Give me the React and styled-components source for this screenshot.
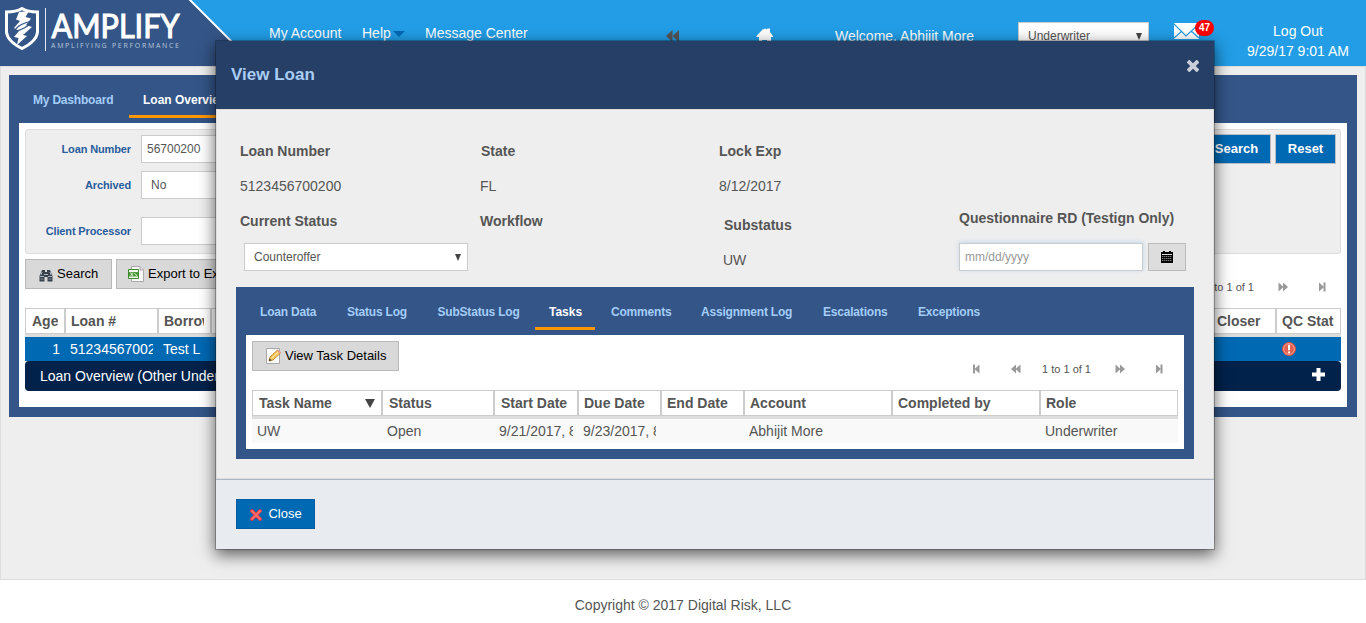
import React from "react";
import styled, { createGlobalStyle } from "styled-components";

const Global = createGlobalStyle`
  *, *::before, *::after { box-sizing: border-box; }
  html, body { margin: 0; padding: 0; height: 623px; overflow: hidden; background: #fff; }
  body { font-family: "Liberation Sans", Arial, sans-serif; font-size: 14px; line-height: 16px; color: #555; }
  svg { display: block; flex: none; }
`;

const Page = styled.div`
  position: relative;
  width: 1366px;
  height: 623px;
  overflow: hidden;
`;

/* ---------- top bar ---------- */
const TopBar = styled.header`
  display: flex;
  align-items: flex-start;
  height: 66px;
  background: #229de6;
  color: #fff;
`;
const TopLink = styled.a`
  display: flex;
  align-items: center;
  gap: 2px;
  white-space: nowrap;
  width: ${(p) => p.$w}px;
  margin-top: ${(p) => p.$top || 25}px;
`;
const IconSlot = styled.span`
  width: ${(p) => p.$w}px;
  margin-top: ${(p) => p.$top}px;
`;
const RoleSelect = styled.div`
  display: flex;
  justify-content: space-between;
  width: 131px;
  height: 28px;
  margin-top: 22px;
  padding: 6px 6px 0 9px;
  border: 1px solid #ccc;
  background: #fff;
  color: #555;
  font-size: 12px;
  line-height: 14px;
`;
const Mail = styled.div`
  position: relative;
  width: 60px;
  margin: 23px 0 0 25px;
`;
const MailBadge = styled.span`
  position: absolute;
  left: 21px;
  top: -3px;
  width: 19px;
  height: 16px;
  border-radius: 8px;
  background: #f00;
  font-size: 10px;
  font-weight: bold;
  line-height: 16px;
  text-align: center;
`;
const Session = styled.div`
  width: 110px;
  margin: 21px 0 0 9px;
  line-height: 20px;
  text-align: center;
`;

/* ---------- page panels ---------- */
const Main = styled.main`
  height: 514px;
  padding: 8px;
  border: 1px solid #ddd;
  background: #eee;
`;
const TabPanel = styled.section`
  width: ${(p) => p.$w}px;
  padding: 0 10px 10px;
  background: #345587;
`;
const Tabs = styled.nav`
  display: flex;
  height: 48px;
  padding-top: ${(p) => p.$top}px;
`;
const Tab = styled.a`
  width: ${(p) => p.$w}px;
  height: 25px;
  margin-right: ${(p) => p.$gap || 0}px;
  padding-left: 14px;
  border-bottom: 3px solid ${(p) => (p.$active ? "#ff9800" : "transparent")};
  color: ${(p) => (p.$active ? "#fff" : "#a3cdf8")};
  font-size: 12px;
  font-weight: bold;
  line-height: 14px;
  letter-spacing: ${(p) => (p.$active ? 0 : -0.2)}px;
  white-space: nowrap;
`;
const PanelBody = styled.div`
  height: ${(p) => p.$h}px;
  padding: 6px;
  background: #fff;
`;
const Filters = styled.div`
  display: flex;
  justify-content: space-between;
  height: 125px;
  padding: 4px;
  border: 1px solid #ddd;
  border-radius: 3px;
  background: #eee;
`;
const FilterList = styled.div`
  padding: 1px;
`;
const FilterRow = styled.label`
  display: flex;
  align-items: center;
  height: 28px;
  margin-bottom: ${(p) => p.$gap}px;
`;
const FilterName = styled.span`
  width: 101px;
  padding-right: 1px;
  color: #2a5d9c;
  font-size: 11px;
  font-weight: bold;
  letter-spacing: -0.13px;
  text-align: right;
  white-space: nowrap;
`;
const FilterBox = styled.span`
  width: 180px;
  height: 28px;
  margin-left: 9px;
  padding: 5px ${(p) => p.$pad || 5}px;
  border: 1px solid #ccc;
  background: #fff;
  font-size: 12px;
`;
const FilterActions = styled.div`
  display: flex;
  gap: 4px;
`;
const BlueButton = styled.button`
  display: flex;
  align-items: center;
  justify-content: center;
  gap: 5px;
  width: ${(p) => p.$w}px;
  height: 30px;
  padding: 0 0 2px;
  border: 1px solid ${(p) => p.$edge || "#b9bec4"};
  background: #0069b4;
  color: #fff;
  font: ${(p) => (p.$bold ? "bold" : "normal")} 13px "Liberation Sans", Arial, sans-serif;
`;
const GrayButton = styled.button`
  display: flex;
  align-items: center;
  gap: 4px;
  width: ${(p) => p.$w}px;
  height: 30px;
  padding: 0 0 0 ${(p) => p.$pad}px;
  border: 1px solid #b8b8b8;
  background: #d9d9d9;
  color: #000;
  font: 13px "Liberation Sans", Arial, sans-serif;
  white-space: nowrap;
  span { margin-top: -2px; }
`;
const ButtonRow = styled.div`
  display: flex;
  gap: 4px;
  margin-top: ${(p) => p.$top || 0}px;
`;
const Pager = styled.div`
  display: flex;
  align-items: center;
  justify-content: flex-end;
  height: 12px;
  margin-left: auto;
  margin-right: ${(p) => p.$right}px;
  margin-top: ${(p) => p.$top}px;
  color: #555;
  font-size: 11px;
  line-height: 12px;
  span { margin: 0 24px 0 21px; }
  svg + svg { margin-left: 31px; }
`;

/* ---------- data tables ---------- */
const Grid = styled.div`
  margin-top: ${(p) => p.$top}px;
`;
const GridHead = styled.div`
  display: flex;
  height: 29px;
  border-bottom: 3px solid #ddd;
`;
const HeadCell = styled.div`
  display: flex;
  justify-content: space-between;
  flex: none;
  width: ${(p) => p.$w}px;
  height: 26px;
  padding: 4px 0 0 ${(p) => p.$pad || 5}px;
  border: 1px solid #ccc;
  background: #fff;
  font-weight: bold;
  white-space: nowrap;
  span { overflow: hidden; margin-right: 6px; }
`;
const GridRow = styled.div`
  display: flex;
  height: 24px;
  background: ${(p) => (p.$selected ? "#0069b4" : "#f9f9f9")};
  color: ${(p) => (p.$selected ? "#fff" : "#555")};
`;
const Cell = styled.div`
  flex: none;
  width: ${(p) => p.$w}px;
  padding: 4px 5px 0;
  text-align: ${(p) => p.$align || "left"};
  span { display: block; overflow: hidden; white-space: nowrap; }
`;
const Accordion = styled.div`
  display: flex;
  justify-content: space-between;
  height: 30px;
  padding: 7px 16px 0 15px;
  border-radius: 4px;
  background: #00224b;
  color: #fff;
`;
const Footer = styled.footer`
  padding-top: 17px;
  text-align: center;
`;

/* ---------- dialog ---------- */
const Dialog = styled.div`
  position: absolute;
  left: 215px;
  top: 40px;
  width: 1000px;
  border: 1px solid rgba(0, 0, 0, 0.25);
  background: #eee;
  background-clip: padding-box;
  box-shadow: 0 5px 15px rgba(0, 0, 0, 0.6);
`;
const DialogHead = styled.div`
  display: flex;
  justify-content: space-between;
  height: 68px;
  padding: 18px 15px 0;
  background: #263f66;
  color: #a9cdf5;
  font-size: 17px;
  font-weight: bold;
  line-height: 32px;
`;
const DialogBody = styled.div`
  height: 370px;
  padding: 0 0 0 19px;
  border: 1px solid #ddd;
`;
const DialogFoot = styled.div`
  height: 70px;
  padding: 19px 20px;
  border-top: 1px solid #acb6c4;
  background: #e8ecf1;
`;
const Fields = styled.div`
  display: flex;
  height: 177px;
`;
const Field = styled.div`
  width: ${(p) => p.$w}px;
  padding-top: 33px;
  padding-left: 4px;
`;
const Name = styled.div`
  margin-top: ${(p) => p.$top || 0}px;
  margin-left: ${(p) => p.$dx || 0}px;
  font-weight: bold;
  white-space: nowrap;
`;
const Value = styled.div`
  margin-top: ${(p) => p.$top}px;
  margin-left: ${(p) => p.$dx || 0}px;
`;
const StatusSelect = styled.div`
  display: flex;
  justify-content: space-between;
  width: 224px;
  height: 28px;
  margin: 14px 0 0 4px;
  padding: 5px 6px 0 9px;
  border: 1px solid #ccc;
  background: #fff;
  font-size: 12px;
`;
const DateRow = styled.div`
  display: flex;
  gap: 5px;
  margin-top: 17px;
`;
const DateInput = styled.div`
  width: 184px;
  height: 28px;
  padding: 5px;
  border: 1px solid #ccc;
  background: #fff;
  box-shadow: 0 -1px 4px rgba(102, 175, 233, 0.35);
  color: #999;
  font-size: 12px;
`;
const CalendarButton = styled.button`
  display: flex;
  align-items: center;
  justify-content: center;
  width: 38px;
  height: 28px;
  padding: 0 0 1px;
  border: 1px solid #bbb;
  background: #ddd;
`;
const CloseIcon = styled.span`
  margin-top: 1px;
`;

/* ---------- drawings ---------- */
const Logo = () => (
  <svg width="269" height="66" viewBox="0 0 269 66">
    <path d="M0 0H189L256 66H0Z" fill="#345587" />
    <path d="M189 -1L257 67" stroke="#fff" strokeWidth="2" />
    <path d="M22 8.500C17 11.500 12 12 6.500 12V32C7 39 14 44.500 22 48.500C30 44.500 37 39 37.500 32V12C32 12 27 11.500 22 8.500Z" fill="#345587" stroke="#fff" strokeWidth="3" />
    <path d="M19 12L29 11L25.500 17L31 18.500L26 25L32 27L23 35L27 36L17 45L18.500 38L14 37L19 31L14 28L20 21L16 19.500Z" fill="#fff" />
    <path d="M15 31C16 26 26 22 31 21.500C31.500 25 20 31 15 31" fill="none" stroke="#345587" strokeWidth="1.200" />
    <path d="M45.500 8V51" stroke="#dfe8f3" strokeWidth="1" />
    <text x="51.500" y="38" fill="#fff" stroke="#fff" strokeWidth="1.100" fontFamily="Lato, sans-serif" fontSize="33" fontWeight="400" textLength="128" lengthAdjust="spacingAndGlyphs">AMPLIFY</text>
    <text x="51" y="47.500" fill="#b7c8de" fontFamily="'Open Sans', sans-serif" fontSize="7" textLength="128">AMPLIFYING PERFORMANCE</text>
  </svg>
);
const Rewind = () => (
  <svg width="13" height="12" viewBox="0 0 13 12">
    <path d="M6.500 0V12L0 6ZM13 0V12L6.500 6Z" fill="#555" />
  </svg>
);
const Home = () => (
  <svg width="18" height="14" viewBox="0 0 18 14">
    <path d="M6.500 1.500L9.500 0.500L10.500 1.500L11.500 0.500H14V4L17 8V9H15V14H11V12H6V14H3V9H0.500V8Z" fill="#fff" />
  </svg>
);
const Envelope = () => (
  <svg width="26" height="16" viewBox="0 0 26 16">
    <path d="M0 0H25V16H0Z" fill="#fff" />
    <path d="M0 1L12 13L25 1M0 15L8 8M25 15L17 8" fill="none" stroke="#229de6" strokeWidth="1.200" />
  </svg>
);
const Caret = ({ w = 6, h = 7, color = "#444", top = 4 }) => (
  <svg width={w} height={h} viewBox="0 0 10 10" preserveAspectRatio="none" style={{ marginTop: top }}>
    <path d="M0 0H10L5 10Z" fill={color} />
  </svg>
);
const Cross = () => (
  <svg width="12" height="12" viewBox="0 0 12 12">
    <path d="M2.300 2.300L9.700 9.700M9.700 2.300L2.300 9.700" stroke="#c9d0da" strokeWidth="3.800" strokeLinecap="square" />
  </svg>
);
const RedCross = () => (
  <svg width="14" height="14" viewBox="0 0 14 14" style={{ marginTop: 4 }}>
    <path d="M3 3L11 11M11 3L3 11" stroke="#e8343b" strokeWidth="3.600" strokeLinecap="round" />
    <path d="M3 3L11 11M11 3L3 11" stroke="#ff6b6b" strokeWidth="2.200" strokeLinecap="round" />
  </svg>
);
const Plus = () => (
  <svg width="13" height="13" viewBox="0 0 13 13">
    <path d="M6.500 0V13M0 6.500H13" stroke="#fff" strokeWidth="4" />
  </svg>
);
const Step = ({ kind }) => {
  const w = { first: 7, prev: 10, next: 10, last: 7 }[kind];
  const d = {
    first: "M0 0.500H2V9.500H0ZM6.500 0.500V9.500L1.500 5Z",
    prev: "M5 0.500V9.500L0 5ZM9.500 0.500V9.500L4.500 5Z",
    next: "M0.500 0.500V9.500L5.500 5ZM5 0.500V9.500L10 5Z",
    last: "M4.500 0.500H6.500V9.500H4.500ZM0 0.500V9.500L5 5Z",
  }[kind];
  return (
    <svg width={w} height="10" viewBox={`0 0 ${w} 10`}>
      <path d={d} fill="#999" />
    </svg>
  );
};
const Binoculars = () => (
  <svg width="14" height="13" viewBox="0 0 14 13" style={{ marginTop: 2 }}>
    <path d="M3 1H6V3H8V1H11L13.500 7V12.500H8.500V8H5.500V12.500H0.500V7Z" fill="#39424c" />
    <path d="M1 7.500H5M9 7.500H13M3 3L2 6M11 3L12 6M5 5.500H9" stroke="#a9b8c6" />
    <path d="M1.500 10H4.500M9.500 10H12.500" stroke="#7f8f9e" />
  </svg>
);
const Excel = () => (
  <svg width="16" height="16" viewBox="0 0 16 16">
    <path d="M3.500 0.500H12L15.500 4V15.500H3.500Z" fill="#fafafa" stroke="#aaa" />
    <path d="M12 0.500V4H15.500" fill="#ddd" stroke="#aaa" />
    <path d="M0.500 3.500H10.500V12.500H0.500Z" fill="#f2f8ee" stroke="#3c8a2c" />
    <path d="M1 6H10V10.500H1Z" fill="#4f9a3c" />
    <path d="M2.500 6.500L5 10M5 6.500L2.500 10M6.500 7L9 10" stroke="#e5f3dd" strokeWidth="0.900" />
  </svg>
);
const Edit = () => (
  <svg width="15" height="16" viewBox="0 0 15 16">
    <path d="M0.500 0.500H13.500V15.500H0.500Z" fill="#fbfbfb" stroke="#a8a8a8" />
    <path d="M3 13L4 9L11.500 2L14.500 5L7 12Z" fill="#f5c65a" stroke="#bd8426" strokeWidth="0.900" />
    <path d="M5.500 10.500L12.500 3.800" stroke="#fff0b5" />
    <path d="M3 13L3.700 10.500L5.500 12.300Z" fill="#333" />
    <path d="M11.500 2L14.500 5" stroke="#e79b91" strokeWidth="1.600" />
  </svg>
);
const Alert = () => (
  <svg width="14" height="14" viewBox="0 0 14 14" style={{ margin: "1px 0 0 1px" }}>
    <circle cx="7" cy="7" r="6.500" fill="#e4604f" stroke="#d4503f" />
    <circle cx="7" cy="7" r="5.400" fill="none" stroke="#f6b3a6" strokeWidth="0.800" />
    <path d="M7 2.800V8.200M7 9.400V11.300" stroke="#fff" strokeWidth="2" />
  </svg>
);
const Calendar = () => (
  <svg width="12" height="12" viewBox="0 0 12 12">
    <path d="M0 1H2V0H4V1H8V0H10V1H12V12H0Z" fill="#000" />
    <path d="M1 3.500H11" stroke="#ddd" strokeWidth="1" />
    <path d="M1 5.500H11M1 7.500H11M1 9.500H11" stroke="#999" strokeWidth="0.800" strokeDasharray="1.400 0.600" />
  </svg>
);

const loanColumns = [
  { name: "Age", w: 40, value: "1", align: "right", pad: 6 },
  { name: "Loan #", w: 93, value: "51234567002" },
  { name: "Borrow", w: 53, value: "Test L" },
  { name: "", w: 1000, value: "" },
  { name: "Closer", w: 65, value: "" },
  { name: "QC Statu", w: 65, value: <Alert /> },
];
const taskColumns = [
  { name: "Task Name", w: 130, value: "UW", pad: 6, sorted: true },
  { name: "Status", w: 112, value: "Open", pad: 6 },
  { name: "Start Date", w: 84, value: "9/21/2017, 8", pad: 6 },
  { name: "Due Date", w: 83, value: "9/23/2017, 8" },
  { name: "End Date", w: 83, value: "" },
  { name: "Account", w: 148, value: "Abhijit More" },
  { name: "Completed by", w: 148, value: "" },
  { name: "Role", w: 138, value: "Underwriter", pad: 5 },
];
const dialogTabs = [
  ["Loan Data", 87], ["Status Log", 90.5], ["SubStatus Log", 111.5], ["Tasks", 60, 2],
  ["Comments", 90], ["Assignment Log", 122], ["Escalations", 95], ["Exceptions", 100],
];

const PagerControls = () => (
  <>
    <Step kind="first" /><Step kind="prev" /><span>1 to 1 of 1</span><Step kind="next" /><Step kind="last" />
  </>
);

const DataTable = ({ columns, selected, top }) => (
  <Grid $top={top}>
    <GridHead>
      {columns.map((c, i) => (
        <HeadCell key={i} $w={c.w} $pad={c.pad}>
          <span>{c.name}</span>
          {c.sorted && <span><Caret w={10} h={9} /></span>}
        </HeadCell>
      ))}
    </GridHead>
    <GridRow $selected={selected}>
      {columns.map((c, i) => <Cell key={i} $w={c.w} $align={c.align}><span>{c.value}</span></Cell>)}
    </GridRow>
  </Grid>
);

export default function App() {
  return (
    <>
      <Global />
      <Page>
        <TopBar>
          <Logo />
          <TopLink $w={93}>My Account</TopLink>
          <TopLink $w={63}>Help<Caret w={12} h={6} color="#0069b4" top={2} /></TopLink>
          <TopLink $w={241}>Message Center</TopLink>
          <IconSlot $w={90} $top={30}><Rewind /></IconSlot>
          <IconSlot $w={79} $top={28}><Home /></IconSlot>
          <TopLink $w={183} $top={28}>Welcome, Abhijit More</TopLink>
          <RoleSelect>Underwriter<Caret /></RoleSelect>
          <Mail><Envelope /><MailBadge>47</MailBadge></Mail>
          <Session>Log Out<br />9/29/17 9:01 AM</Session>
        </TopBar>

        <Main>
          <TabPanel $w={1348}>
            <Tabs $top={18}>
              <Tab $w={110}>My Dashboard</Tab>
              <Tab $w={120} $active>Loan Overview</Tab>
            </Tabs>
            <PanelBody $h={284}>
              <Filters>
                <FilterList>
                  <FilterRow $gap={8}><FilterName>Loan Number</FilterName><FilterBox>56700200</FilterBox></FilterRow>
                  <FilterRow $gap={18}><FilterName>Archived</FilterName><FilterBox $pad={9}>No</FilterBox></FilterRow>
                  <FilterRow $gap={0}><FilterName>Client Processor</FilterName><FilterBox /></FilterRow>
                </FilterList>
                <FilterActions>
                  <BlueButton $w={69} $bold>Search</BlueButton>
                  <BlueButton $w={61} $bold>Reset</BlueButton>
                </FilterActions>
              </Filters>
              <ButtonRow $top={5}>
                <GrayButton $w={87} $pad={13}><Binoculars /><span>Search</span></GrayButton>
                <GrayButton $w={140} $pad={11}><Excel /><span>Export to Excel</span></GrayButton>
                <Pager $top={22} $right={15}><PagerControls /></Pager>
              </ButtonRow>
              <DataTable columns={loanColumns} top={15} selected />
              <Accordion>Loan Overview (Other Underwriters)<Plus /></Accordion>
            </PanelBody>
          </TabPanel>
        </Main>
        <Footer>Copyright © 2017 Digital Risk, LLC</Footer>

        <Dialog>
          <DialogHead>View Loan<CloseIcon><Cross /></CloseIcon></DialogHead>
          <DialogBody>
            <Fields>
              <Field $w={240}>
                <Name>Loan Number</Name>
                <Value $top={19}>5123456700200</Value>
                <Name $top={19}>Current Status</Name>
                <StatusSelect>Counteroffer<Caret top={5} /></StatusSelect>
              </Field>
              <Field $w={239}>
                <Name $dx={1}>State</Name>
                <Value $top={19}>FL</Value>
                <Name $top={19}>Workflow</Name>
              </Field>
              <Field $w={240}>
                <Name>Lock Exp</Name>
                <Value $top={19}>8/12/2017</Value>
                <Name $top={23} $dx={5}>Substatus</Name>
                <Value $top={19} $dx={4}>UW</Value>
              </Field>
              <Field $w={240}>
                <Name $top={67}>Questionnaire RD (Testign Only)</Name>
                <DateRow>
                  <DateInput>mm/dd/yyyy</DateInput>
                  <CalendarButton><Calendar /></CalendarButton>
                </DateRow>
              </Field>
            </Fields>
            <TabPanel $w={958}>
              <Tabs $top={18}>
                {dialogTabs.map(([name, w, gap]) => <Tab key={name} $w={w} $gap={gap} $active={name === "Tasks"}>{name}</Tab>)}
              </Tabs>
              <PanelBody $h={114}>
                <ButtonRow>
                  <GrayButton $w={147} $pad={13}><Edit /><span>View Task Details</span></GrayButton>
                  <Pager $top={22} $right={15}><PagerControls /></Pager>
                </ButtonRow>
                <DataTable columns={taskColumns} top={15} />
              </PanelBody>
            </TabPanel>
          </DialogBody>
          <DialogFoot>
            <BlueButton $w={79} $edge="#005c9f"><RedCross />Close</BlueButton>
          </DialogFoot>
        </Dialog>
      </Page>
    </>
  );
}
